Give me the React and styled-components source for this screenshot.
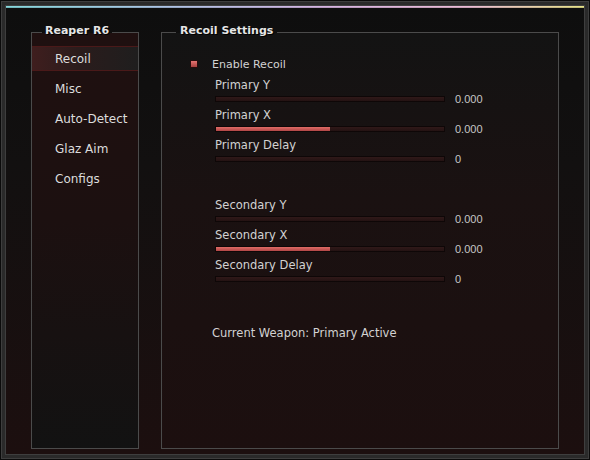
import React from 'react';
import styled, { createGlobalStyle } from 'styled-components';

const GlobalStyle = createGlobalStyle`
  html, body {
    margin: 0;
    padding: 0;
    background: #0b0b0b;
  }
  body {
    font-family: "DejaVu Sans", Verdana, sans-serif;
  }
`;

const Frame = styled.div`
  box-sizing: border-box;
  width: 590px;
  height: 460px;
  padding: 4px;
  display: flex;
  background: #2a2a2a;
  border: 1px solid #0b0b0b;
  box-shadow: inset 0 0 0 1px #3e3e3e;
`;

const Window = styled.div`
  flex: 1;
  display: flex;
  flex-direction: column;
  min-height: 0;
  border: 1px solid #3e3e3e;
  background: linear-gradient(180deg, #0e0e0e 0%, #121010 35%, #1c0f0f 100%);
`;

const AccentBar = styled.div`
  height: 2px;
  flex: none;
  background: linear-gradient(90deg, #86d8dc 0%, #aec4e6 28%, #d6b4e2 55%, #ecbcd6 80%, #e6e288 100%);
  box-shadow: inset 0 -1px 0 rgba(0, 0, 0, 0.15);
`;

const Body = styled.div`
  flex: 1;
  display: flex;
  gap: 22px;
  min-height: 0;
  padding: 16px 25px 5px 25px;
`;

const Group = styled.fieldset`
  box-sizing: border-box;
  width: ${(p) => p.$width}px;
  min-width: 0;
  margin: 0;
  padding: 0;
  border: 1px solid #4b4b4b;
  background: ${(p) => p.$bg};
`;

const GroupTitle = styled.legend`
  margin-left: ${(p) => p.$offset}px;
  padding: 0 ${(p) => p.$pad}px 3px;
  font-size: 11px;
  font-weight: bold;
  line-height: 13px;
  color: #e6e6e6;
  text-shadow: 1px 1px 0 #000;
`;

const Nav = styled.nav`
  display: flex;
  flex-direction: column;
  gap: 5px;
  padding-top: 6px;
`;

const NavItem = styled.div`
  box-sizing: border-box;
  height: 25px;
  display: flex;
  align-items: center;
  padding-left: 23px;
  font-size: 12px;
  color: #dcdcdc;
  border-top: 1px solid ${(p) => (p.$active ? '#4a1919' : 'transparent')};
  border-bottom: 1px solid ${(p) => (p.$active ? '#4a1919' : 'transparent')};
  background: ${(p) => (p.$active ? 'linear-gradient(90deg, #3f1e1e 0%, #2a1c1c 45%, #1f1e1e 100%)' : 'transparent')};
`;

const Settings = styled.div`
  display: flex;
  flex-direction: column;
  padding: 17px 0 0 28px;
`;

const CheckRow = styled.label`
  display: flex;
  align-items: center;
  gap: 14px;
  height: 14px;
  font-size: 11px;
  color: #d2d2d2;
`;

const CheckBox = styled.span`
  box-sizing: border-box;
  width: 8px;
  height: 8px;
  border: 1px solid #260c0c;
  background: linear-gradient(180deg, #e67472 0%, #a8403e 100%);
`;

const SliderGroup = styled.div`
  display: flex;
  flex-direction: column;
  gap: 4px;
  margin: ${(p) => p.$top}px 0 0 25px;
`;

const Slider = styled.div`
  display: flex;
  flex-direction: column;
`;

const SliderLabel = styled.div`
  font-size: 11.5px;
  line-height: 15px;
  color: #d2d2d2;
`;

const TrackRow = styled.div`
  display: flex;
  align-items: center;
  gap: 10px;
  height: 11px;
`;

const Track = styled.div`
  box-sizing: border-box;
  width: 230px;
  height: 6px;
  border: 1px solid #0e0707;
  background: linear-gradient(180deg, #301919 0%, #241313 100%);
`;

const Fill = styled.div`
  height: 100%;
  background: linear-gradient(180deg, #e06c66 0%, #b04646 100%);
`;

const Value = styled.span`
  font-family: "Liberation Sans", Arial, sans-serif;
  font-size: 11px;
  color: #c6c6c6;
`;

const Status = styled.div`
  margin: 42px 0 0 22px;
  font-size: 11.5px;
  line-height: 14px;
  color: #d2d2d2;
`;

const tabs = ['Recoil', 'Misc', 'Auto-Detect', 'Glaz Aim', 'Configs'];

const primary = [
  { label: 'Primary Y', fill: 0, value: '0.000' },
  { label: 'Primary X', fill: 50, value: '0.000' },
  { label: 'Primary Delay', fill: 0, value: '0' },
];

const secondary = [
  { label: 'Secondary Y', fill: 0, value: '0.000' },
  { label: 'Secondary X', fill: 50, value: '0.000' },
  { label: 'Secondary Delay', fill: 0, value: '0' },
];

const SliderList = ({ items, top }) => (
  <SliderGroup $top={top}>
    {items.map((s) => (
      <Slider key={s.label}>
        <SliderLabel>{s.label}</SliderLabel>
        <TrackRow>
          <Track>
            <Fill style={{ width: `${s.fill}%` }} />
          </Track>
          <Value>{s.value}</Value>
        </TrackRow>
      </Slider>
    ))}
  </SliderGroup>
);

const App = () => (
  <>
    <GlobalStyle />
    <Frame>
      <Window>
        <AccentBar />
        <Body>
          <Group $width={108} $bg="linear-gradient(180deg, #1f1010 0%, #1c1010 45%, #121212 100%)">
            <GroupTitle $offset={10} $pad={3}>Reaper R6</GroupTitle>
            <Nav>
              {tabs.map((t, i) => (
                <NavItem key={t} $active={i === 0}>{t}</NavItem>
              ))}
            </Nav>
          </Group>
          <Group $width={398} $bg="linear-gradient(180deg, #131313 0%, #1a1111 40%, #1c0f0f 100%)">
            <GroupTitle $offset={14} $pad={4}>Recoil Settings</GroupTitle>
            <Settings>
              <CheckRow>
                <CheckBox />
                Enable Recoil
              </CheckRow>
              <SliderList items={primary} top={7} />
              <SliderList items={secondary} top={34} />
              <Status>Current Weapon: Primary Active</Status>
            </Settings>
          </Group>
        </Body>
      </Window>
    </Frame>
  </>
);

export default App;
